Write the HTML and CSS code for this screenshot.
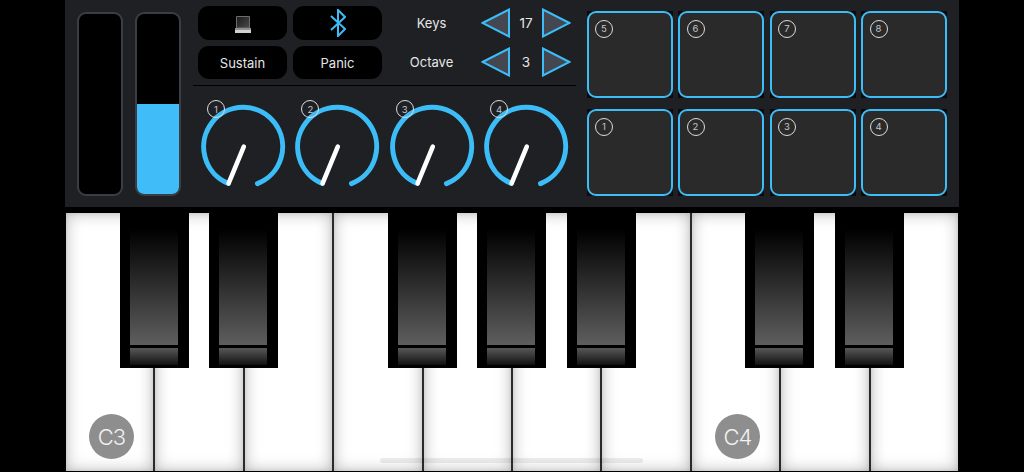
FILE: index.html
```html
<!DOCTYPE html>
<html lang="en">
<head>
<meta charset="utf-8">
<title>Keyboard</title>
<link rel="stylesheet" href="styles.css">
</head>
<body>
<main class="app">
  <section class="panel">
    <div class="meters">
      <div class="meter"></div>
      <div class="meter"><div class="meter-fill"></div></div>
    </div>
    <div class="center">
      <div class="top">
        <div class="buttons">
          <button class="btn"><svg class="laptop" viewBox="0 0 16 17"><defs><linearGradient id="scr" x1="0" y1="0" x2="1" y2="1"><stop offset="0" stop-color="#1a1a1c"/><stop offset="1" stop-color="#4a4a4c"/></linearGradient></defs><path d="M1.5 0.5 H14.5 V12 H1.5 Z" fill="url(#scr)" stroke="#6d6d6d"/><rect x="0" y="12" width="16" height="2" fill="#8f8f8f"/><rect x="0" y="14" width="16" height="3" fill="#d2d2d2"/></svg></button>
          <button class="btn"><svg class="bt" viewBox="0 0 16 28"><path d="M1 7 L15 20 L8 27 L8 1 L15 8 L1 21" fill="none" stroke="#3dbdf8" stroke-width="2"/></svg></button>
          <button class="btn">Sustain</button>
          <button class="btn">Panic</button>
        </div>
        <div class="steppers">
          <span class="step-label">Keys</span>
          <svg class="tri" viewBox="0 0 29 30"><path d="M1.5 15 L28 1.5 V28.5 Z"/></svg>
          <span class="step-value">17</span>
          <svg class="tri" viewBox="0 0 29 30"><path d="M27.5 15 L1 1.5 V28.5 Z"/></svg>
          <span class="step-label">Octave</span>
          <svg class="tri" viewBox="0 0 29 30"><path d="M1.5 15 L28 1.5 V28.5 Z"/></svg>
          <span class="step-value">3</span>
          <svg class="tri" viewBox="0 0 29 30"><path d="M27.5 15 L1 1.5 V28.5 Z"/></svg>
        </div>
      </div>
      <div class="knobs">
        <div class="knob"><svg viewBox="0 0 94 100"><use href="#knob-art"/></svg><span class="num">1</span></div>
        <div class="knob"><svg viewBox="0 0 94 100"><use href="#knob-art"/></svg><span class="num">2</span></div>
        <div class="knob"><svg viewBox="0 0 94 100"><use href="#knob-art"/></svg><span class="num">3</span></div>
        <div class="knob"><svg viewBox="0 0 94 100"><use href="#knob-art"/></svg><span class="num">4</span></div>
      </div>
    </div>
    <div class="pads">
      <div class="pad"><div class="pad-face"><span class="num">5</span></div></div>
      <div class="pad"><div class="pad-face"><span class="num">6</span></div></div>
      <div class="pad"><div class="pad-face"><span class="num">7</span></div></div>
      <div class="pad"><div class="pad-face"><span class="num">8</span></div></div>
      <div class="pad"><div class="pad-face"><span class="num">1</span></div></div>
      <div class="pad"><div class="pad-face"><span class="num">2</span></div></div>
      <div class="pad"><div class="pad-face"><span class="num">3</span></div></div>
      <div class="pad"><div class="pad-face"><span class="num">4</span></div></div>
    </div>
  </section>
  <section class="keyboard">
    <div class="white"><span class="note">C3</span></div>
    <div class="white"></div>
    <div class="white"></div>
    <div class="white"></div>
    <div class="white"></div>
    <div class="white"></div>
    <div class="white"></div>
    <div class="white"><span class="note">C4</span></div>
    <div class="white"></div>
    <div class="white"></div>
    <div class="black b1"><i></i><b></b></div>
    <div class="black b2"><i></i><b></b></div>
    <div class="black b3"><i></i><b></b></div>
    <div class="black b4"><i></i><b></b></div>
    <div class="black b5"><i></i><b></b></div>
    <div class="black b6"><i></i><b></b></div>
    <div class="black b7"><i></i><b></b></div>
  </section>
  <div class="home"></div>
</main>
<svg class="defs" width="0" height="0">
  <defs>
    <g id="knob-art">
      <path d="M32.3 87.4 A39.5 39.5 0 1 1 61.5 87.6" fill="none" stroke="#3dbdf8" stroke-width="5" stroke-linecap="round"/>
      <path d="M47.8 50.6 L32.6 87.4" stroke="#fff" stroke-width="4.6" stroke-linecap="round"/>
    </g>
  </defs>
</svg>
</body>
</html>
```
FILE: styles.css
```css
* { box-sizing: border-box; }
html, body { margin: 0; height: 100%; background: #000; overflow: hidden; }
body { font-family: "Inter", "Liberation Sans", sans-serif; color: #e8e8e8; }
.defs { display: block; }
.app { position: relative; width: 1024px; height: 472px; padding-left: 65px; }

.panel {
  display: flex;
  width: 894px;
  height: 207px;
  background: #1e2024;
}

.meters { display: flex; gap: 12px; padding: 12px 0 0 12px; }
.meter {
  display: flex;
  flex-direction: column;
  justify-content: flex-end;
  width: 46px;
  height: 184px;
  background: #000;
  border: 2px solid #3a3d44;
  border-radius: 9px;
  overflow: hidden;
}
.meter-fill { height: 90px; background: #40bdf8; }

.center { width: 383px; margin-left: 12px; }
.top {
  display: flex;
  height: 86px;
  padding: 6px 0 0 5px;
  border-bottom: 1px solid #000;
}
.buttons {
  display: grid;
  grid-template-columns: 89px 89px;
  grid-template-rows: 34px 33px;
  gap: 6px;
}
.btn {
  display: flex;
  align-items: center;
  justify-content: center;
  padding: 0;
  border: 0;
  border-radius: 11px;
  background: #000;
  color: #e6e6e6;
  font: 400 13px "Inter", "Liberation Sans", sans-serif;
}
.laptop { width: 16px; height: 17px; margin-top: 2px; }
.bt { width: 16px; height: 28px; }

.steppers {
  display: grid;
  grid-template-columns: 99px 29px 32px 29px;
  grid-template-rows: 30px 30px;
  row-gap: 9px;
  align-items: center;
  margin-top: 2px;
}
.step-label, .step-value { text-align: center; font-size: 13px; color: #e6e6e6; }
.step-value { font-size: 13.5px; }
.tri { display: block; width: 29px; height: 30px; }
.tri path { fill: #444750; stroke: #3dbdf8; stroke-width: 2; }

.knobs { display: flex; gap: 0.4px; padding: 10px 0 0 3px; }
.knob { position: relative; width: 94px; height: 100px; }
.knob svg { display: block; width: 94px; height: 100px; }
.knob .num { left: 11px; top: 4px; }

.num {
  position: absolute;
  display: flex;
  align-items: center;
  justify-content: center;
  width: 18px;
  height: 18px;
  border: 1px solid #dcdcdc;
  border-radius: 50%;
  font-size: 9.5px;
  color: #c8c8c8;
}

.pads {
  display: grid;
  grid-template-columns: repeat(4, 86px);
  grid-template-rows: 87px 87px;
  gap: 11px 5.5px;
  margin: 11px 0 0 10.5px;
}
.pad { background: #0a0a0b; }
.pad-face {
  position: relative;
  height: 100%;
  background: #2a2a2a;
  border: 2.5px solid #3dbdf8;
  border-radius: 9px;
}
.pad-face .num { left: 6.5px; top: 6.5px; }

.keyboard {
  position: relative;
  display: flex;
  width: 892px;
  height: 258px;
  margin: 6px 0 0 1px;
  background: #2a2a2c;
  gap: 2px;
}
.white {
  position: relative;
  flex: 1;
  background: #fff;
  box-shadow: inset 0 0 16px rgba(0, 0, 0, .28), inset 0 0 4px rgba(0, 0, 0, .1);
}
.note {
  position: absolute;
  left: 23px;
  bottom: 12px;
  display: flex;
  align-items: center;
  justify-content: center;
  width: 45px;
  height: 45px;
  border-radius: 50%;
  background: #8e8e8e;
  color: #f2f2f2;
  font-size: 22px;
  font-weight: 300;
  letter-spacing: -1px;
}
.black {
  position: absolute;
  top: 0;
  width: 69px;
  height: 155px;
  padding: 0 11px 0 10px;
  background: #000;
  z-index: 1;
}
.black i {
  display: block;
  height: 132px;
  margin-bottom: 3px;
  background: linear-gradient(#000 12%, #232323 45%, #5e5e5e);
}
.black b {
  display: block;
  height: 17px;
  background: linear-gradient(#585858, #111);
}
.b1 { left: 54px; }
.b2 { left: 143px; }
.b3 { left: 322px; }
.b4 { left: 411px; }
.b5 { left: 501px; }
.b6 { left: 679px; }
.b7 { left: 769px; }

.home {
  position: absolute;
  left: 380px;
  top: 458px;
  width: 263px;
  height: 5px;
  border-radius: 3px;
  background: rgba(0, 0, 0, .07);
  z-index: 2;
}
```
